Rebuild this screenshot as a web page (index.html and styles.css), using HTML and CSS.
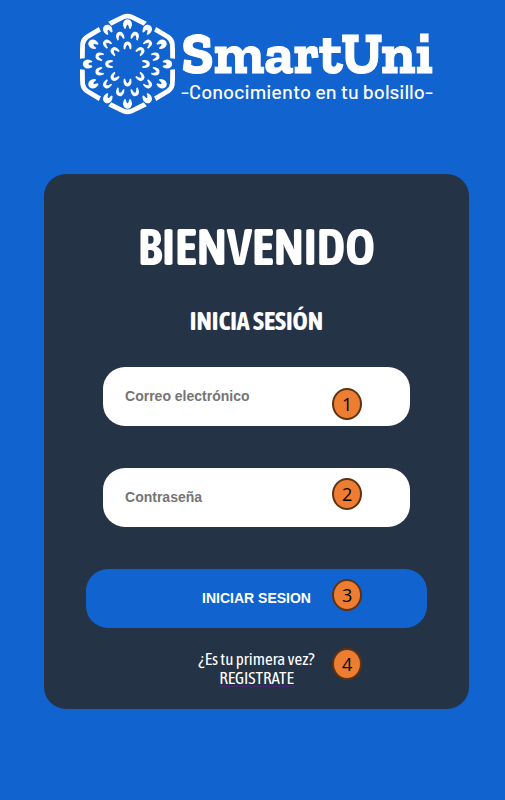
FILE: index.html
```html
<!DOCTYPE html>
<html lang="es">
<head>
<meta charset="utf-8">
<meta name="viewport" content="width=device-width, initial-scale=1">
<title>SmartUni</title>
<link rel="stylesheet" href="styles.css">
</head>
<body>
<header class="brand">
  <svg class="brand-mark" viewBox="-142 -152 284 304" aria-hidden="true">
    <defs>
      <path id="edge" d="M-55 -126 L-14 -147 Q0 -153 14 -147 L55 -126 L46 -114 L10 -134 Q0 -138 -10 -134 L-46 -114 Z"/>
      <path id="petal" d="M-9 15 Q-18 0 -9 -10 Q0 -17 9 -10 Q18 0 9 15 L5 14 Q4 5 0 2 Q-4 5 -5 14 Z"/>
      <path id="bud" d="M-11 12 Q-14 -3 -7 -9 Q0 -13 7 -9 Q14 -3 11 12 L7 12 Q5 1 0 -2 Q-5 1 -7 12 Z"/>
    </defs>
    <g transform="scale(1.05 1)">
      <use href="#edge"/>
      <use href="#edge" transform="rotate(60)"/>
      <use href="#edge" transform="rotate(120)"/>
      <use href="#edge" transform="rotate(180)"/>
      <use href="#edge" transform="rotate(240)"/>
      <use href="#edge" transform="rotate(300)"/>
    </g>
    <g>
      <use href="#petal" transform="translate(0 -120)"/>
      <use href="#petal" transform="rotate(30) translate(0 -120)"/>
      <use href="#petal" transform="rotate(60) translate(0 -120)"/>
      <use href="#petal" transform="rotate(90) translate(0 -120)"/>
      <use href="#petal" transform="rotate(120) translate(0 -120)"/>
      <use href="#petal" transform="rotate(150) translate(0 -120)"/>
      <use href="#petal" transform="rotate(180) translate(0 -120)"/>
      <use href="#petal" transform="rotate(210) translate(0 -120)"/>
      <use href="#petal" transform="rotate(240) translate(0 -120)"/>
      <use href="#petal" transform="rotate(270) translate(0 -120)"/>
      <use href="#petal" transform="rotate(300) translate(0 -120)"/>
      <use href="#petal" transform="rotate(330) translate(0 -120)"/>
    </g>
    <g>
      <use href="#bud" transform="rotate(15) translate(0 -88)"/>
      <use href="#bud" transform="rotate(45) translate(0 -88)"/>
      <use href="#bud" transform="rotate(75) translate(0 -88)"/>
      <use href="#bud" transform="rotate(105) translate(0 -88)"/>
      <use href="#bud" transform="rotate(135) translate(0 -88)"/>
      <use href="#bud" transform="rotate(165) translate(0 -88)"/>
      <use href="#bud" transform="rotate(195) translate(0 -88)"/>
      <use href="#bud" transform="rotate(225) translate(0 -88)"/>
      <use href="#bud" transform="rotate(255) translate(0 -88)"/>
      <use href="#bud" transform="rotate(285) translate(0 -88)"/>
      <use href="#bud" transform="rotate(315) translate(0 -88)"/>
      <use href="#bud" transform="rotate(345) translate(0 -88)"/>
    </g>
    <g>
      <use href="#bud" transform="translate(0 -56)"/>
      <use href="#bud" transform="rotate(45) translate(0 -56)"/>
      <use href="#bud" transform="rotate(90) translate(0 -56)"/>
      <use href="#bud" transform="rotate(135) translate(0 -56)"/>
      <use href="#bud" transform="rotate(180) translate(0 -56)"/>
      <use href="#bud" transform="rotate(225) translate(0 -56)"/>
      <use href="#bud" transform="rotate(270) translate(0 -56)"/>
      <use href="#bud" transform="rotate(315) translate(0 -56)"/>
    </g>
  </svg>
  <div class="brand-text">
    <span class="brand-name">SmartUni</span>
    <span class="brand-tagline">-Conocimiento en tu bolsillo-</span>
  </div>
</header>
<main class="card">
  <h1 class="title">BIENVENIDO</h1>
  <h2 class="subtitle">INICIA SESIÓN</h2>
  <form class="form">
    <div class="row">
      <input class="field" type="email" placeholder="Correo electrónico" aria-label="Correo electrónico">
      <span class="badge badge-low">1</span>
    </div>
    <div class="row">
      <input class="field" type="password" placeholder="Contraseña" aria-label="Contraseña">
      <span class="badge">2</span>
    </div>
    <div class="row">
      <button class="submit" type="submit">INICIAR SESION</button>
      <span class="badge">3</span>
    </div>
  </form>
  <div class="row signup">
    <p class="signup-text">¿Es tu primera vez?<br><a class="signup-link" href="#registro">REGISTRATE</a></p>
    <span class="badge badge-top">4</span>
  </div>
</main>
</body>
</html>
```
FILE: styles.css
```css
* {
  box-sizing: border-box;
}

body {
  margin: 0;
  min-height: 100vh;
  padding: 13px 36px 40px 44px;
  background: #1164cf;
  color: #fff;
  font-family: "Asap Condensed", "Liberation Sans Narrow", "Liberation Sans", sans-serif;
}

.brand {
  display: flex;
  justify-content: center;
  gap: 6px;
  height: 102px;
  margin-bottom: 59px;
}

.brand-mark {
  width: 95px;
  height: 102px;
  flex: none;
  fill: #fff;
}

.brand-text {
  display: flex;
  flex-direction: column;
  align-items: center;
  padding-top: 12px;
  white-space: nowrap;
}

.brand-name {
  font: bold 58px/56px "Roboto Slab", "Zilla Slab", "DejaVu Serif Condensed", "DejaVu Serif", serif;
  -webkit-text-stroke: 1px #fff;
}

.brand-tagline {
  font: 500 20px/20px Barlow, Roboto, sans-serif;
}

.card {
  padding: 43px 42px 21px;
  border-radius: 22px;
  background: #253347;
  text-align: center;
}

.title {
  margin: 0 0 24px;
  font-size: 51px;
  line-height: 60px;
}

.subtitle {
  margin: 0 0 26px;
  font-size: 26px;
  line-height: 40px;
}

.form {
  display: flex;
  flex-direction: column;
  gap: 42px;
}

.row {
  position: relative;
  display: flex;
  justify-content: center;
}

.field,
.submit {
  height: 59px;
  border: 0;
  border-radius: 22px;
  font: bold 14px/20px "Liberation Sans", Arial, sans-serif;
}

.field {
  width: 90%;
  padding: 0 22px 2px;
  background: #fff;
  color: #253347;
}

.field::placeholder {
  color: #757575;
  opacity: 1;
}

.submit {
  width: 100%;
  padding: 0 22px 2px;
  background: #1164cf;
  color: #fff;
}

.badge {
  position: absolute;
  top: 10px;
  right: 19%;
  width: 30px;
  height: 32px;
  border: 2px solid #5e3213;
  border-radius: 50%;
  background: #ed7d31;
  color: #000;
  font: 18px/28px "Open Sans", "Noto Sans", sans-serif;
  text-align: center;
}

.badge-low {
  top: 21px;
}

.badge-top {
  top: -2px;
}

.signup {
  margin-top: 22px;
}

.signup-text {
  margin: 0;
  font-size: 17px;
  line-height: 19px;
}

.signup-link {
  color: #fff;
  text-decoration: underline #46286e;
  text-underline-offset: 2px;
}
```
